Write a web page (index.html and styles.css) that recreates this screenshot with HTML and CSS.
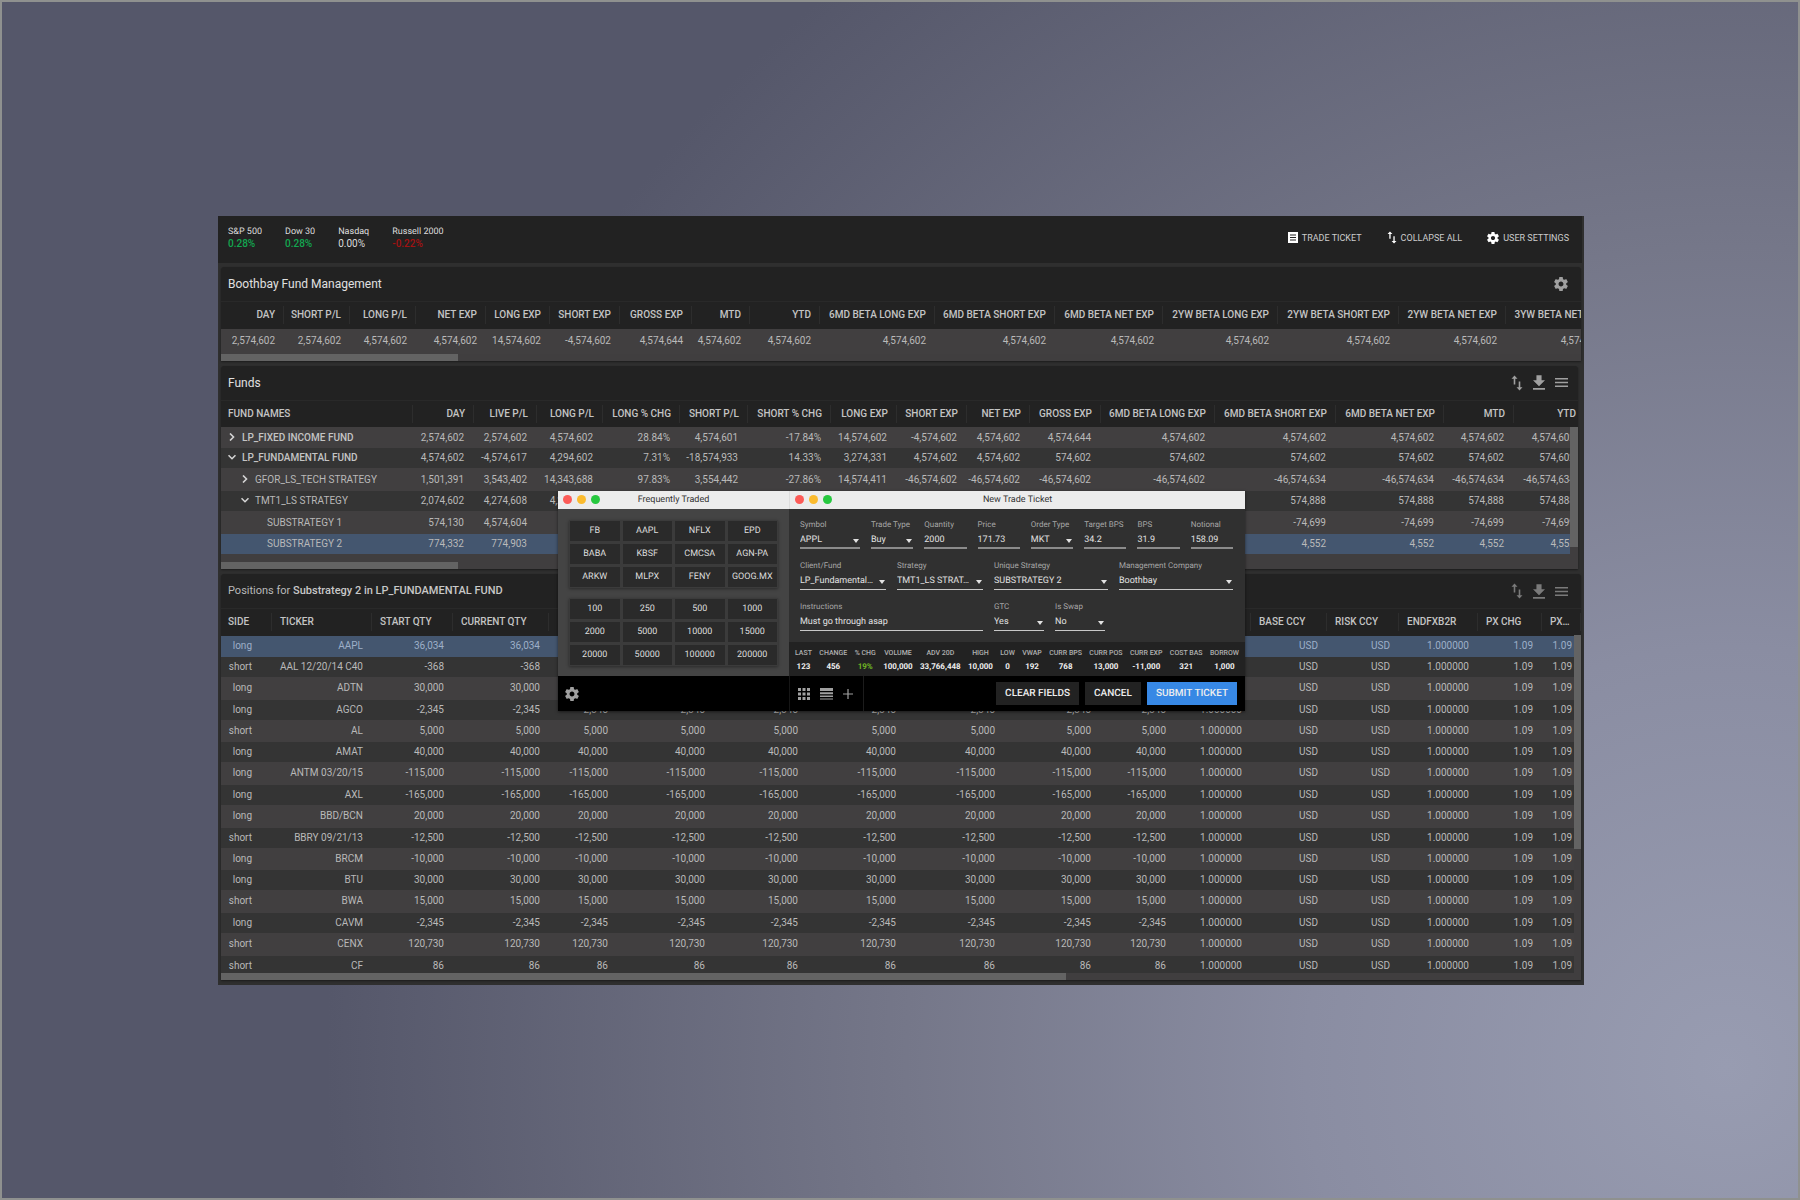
FILE: index.html
```html
<!DOCTYPE html>
<html lang="en">
<head>
<meta charset="utf-8">
<title>Boothbay Fund Management</title>
<link rel="stylesheet" href="styles.css">
</head>
<body>
<svg class="sprite" aria-hidden="true">
  <symbol id="i-gear" viewBox="2 2 20 20"><path d="M19.43 12.98c.04-.32.07-.64.07-.98s-.03-.66-.07-.98l2.11-1.65c.19-.15.24-.42.12-.64l-2-3.46c-.12-.22-.39-.3-.61-.22l-2.49 1c-.52-.4-1.08-.73-1.69-.98l-.38-2.65C14.46 2.18 14.25 2 14 2h-4c-.25 0-.46.18-.49.42l-.38 2.65c-.61.25-1.17.59-1.69.98l-2.49-1c-.23-.09-.49 0-.61.22l-2 3.46c-.13.22-.07.49.12.64l2.11 1.65c-.04.32-.07.65-.07.98s.03.66.07.98l-2.11 1.65c-.19.15-.24.42-.12.64l2 3.46c.12.22.39.3.61.22l2.49-1c.52.4 1.08.73 1.69.98l.38 2.65c.03.24.24.42.49.42h4c.25 0 .46-.18.49-.42l.38-2.65c.61-.25 1.17-.59 1.69-.98l2.49 1c.23.09.49 0 .61-.22l2-3.46c.12-.22.07-.49-.12-.64l-2.11-1.65zM12 15.5c-1.93 0-3.500-1.57-3.500-3.5s1.57-3.500 3.500-3.500 3.500 1.57 3.500 3.500-1.57 3.500-3.500 3.500z"/></symbol>
  <symbol id="i-sort" viewBox="0 0 12 16"><path d="M3.5 0.5L0.5 3.700h2.200v5.800h1.600V3.700h2.200zM8.500 15.500l3-3.200H9.300V6.500H7.700v5.800H5.500z"/></symbol>
  <symbol id="i-ticket" viewBox="0 0 10 11"><path fill-rule="evenodd" d="M0 0h10v11H0zM2 2.500v1h6v-1zM2 5v1h6V5zM2 7.500v1h6v-1z"/></symbol>
  <symbol id="i-download" viewBox="5 3 14 17"><path d="M19 9h-4V3H9v6H5l7 7 7-7zM5 18v2h14v-2H5z"/></symbol>
  <symbol id="i-menu" viewBox="0 0 13 9"><path d="M0 0h13v1.400H0zM0 3.800h13v1.400H0zM0 7.600h13V9H0z"/></symbol>
  <symbol id="i-right" viewBox="0 0 8 8"><path d="M2 0.500L5.500 4L2 7.500" fill="none" stroke="currentColor" stroke-width="1.600"/></symbol>
  <symbol id="i-down" viewBox="0 0 8 8"><path d="M0.500 2.200L4 5.700L7.500 2.200" fill="none" stroke="currentColor" stroke-width="1.600"/></symbol>
  <symbol id="i-grid" viewBox="0 0 12 12"><path d="M0 0h3v3H0zM4.500 0h3v3h-3zM9 0h3v3H9zM0 4.500h3v3H0zM4.500 4.500h3v3h-3zM9 4.500h3v3H9zM0 9h3v3H0zM4.500 9h3v3h-3zM9 9h3v3H9z"/></symbol>
  <symbol id="i-list" viewBox="0 0 13 12"><path d="M0 0h13v3H0zM0 4.200h13v2H0zM0 7.400h13v1.600H0zM0 10.400h13v1H0z"/></symbol>
  <symbol id="i-plus" viewBox="0 0 10 10"><path d="M4.400 0h1.200v4.400H10v1.200H5.600V10H4.400V5.600H0V4.400h4.400z"/></symbol>
</svg>

<div class="stage">
  <div class="app">
    <header class="topbar">
      <dl class="indices">
        <div><dt>S&amp;P 500</dt><dd class="up">0.28%</dd></div>
        <div><dt>Dow 30</dt><dd class="up">0.28%</dd></div>
        <div><dt>Nasdaq</dt><dd>0.00%</dd></div>
        <div><dt>Russell 2000</dt><dd class="down">-0.22%</dd></div>
      </dl>
      <nav class="actions">
        <button type="button"><svg class="icon icon--ticket"><use href="#i-ticket"/></svg>TRADE TICKET</button>
        <button type="button"><svg class="icon icon--collapse"><use href="#i-sort"/></svg>COLLAPSE ALL</button>
        <button type="button"><svg class="icon icon--settings"><use href="#i-gear"/></svg>USER SETTINGS</button>
      </nav>
    </header>

    <main class="panels">
      <section class="panel">
        <div class="panel__head">
          <h2>Boothbay Fund Management</h2>
          <button type="button" class="tool" aria-label="Settings"><svg class="icon icon--gear"><use href="#i-gear"/></svg></button>
        </div>
        <div class="panel__body">
          <table class="grid grid--summary">
            <colgroup><col><col><col><col><col><col><col><col><col><col><col><col><col><col><col><col></colgroup>
            <thead><tr><th>DAY</th><th>SHORT P/L</th><th>LONG P/L</th><th>NET EXP</th><th>LONG EXP</th><th>SHORT EXP</th><th>GROSS EXP</th><th>MTD</th><th>YTD</th><th>6MD BETA LONG EXP</th><th>6MD BETA SHORT EXP</th><th>6MD BETA NET EXP</th><th>2YW BETA LONG EXP</th><th>2YW BETA SHORT EXP</th><th>2YW BETA NET EXP</th><th>3YW BETA NET EXP</th></tr></thead>
            <tbody><tr><td>2,574,602</td><td>2,574,602</td><td>4,574,602</td><td>4,574,602</td><td>14,574,602</td><td>-4,574,602</td><td>4,574,644</td><td>4,574,602</td><td>4,574,602</td><td>4,574,602</td><td>4,574,602</td><td>4,574,602</td><td>4,574,602</td><td>4,574,602</td><td>4,574,602</td><td>4,574,602</td></tr></tbody>
          </table>
        </div>
        <div class="hbar"><span class="hbar__thumb"></span></div>
      </section>

      <section class="panel panel--funds">
        <div class="panel__head">
          <h2>Funds</h2>
          <div class="tools">
            <button type="button" class="tool" aria-label="Sort"><svg class="icon icon--sort"><use href="#i-sort"/></svg></button>
            <button type="button" class="tool" aria-label="Download"><svg class="icon icon--download"><use href="#i-download"/></svg></button>
            <button type="button" class="tool" aria-label="Menu"><svg class="icon icon--menu"><use href="#i-menu"/></svg></button>
          </div>
        </div>
        <div class="panel__body">
          <table class="grid grid--funds">
            <colgroup><col><col><col><col><col><col><col><col><col><col><col><col><col><col><col><col></colgroup>
            <thead><tr><th>FUND NAMES</th><th>DAY</th><th>LIVE P/L</th><th>LONG P/L</th><th>LONG % CHG</th><th>SHORT P/L</th><th>SHORT % CHG</th><th>LONG EXP</th><th>SHORT EXP</th><th>NET EXP</th><th>GROSS EXP</th><th>6MD BETA LONG EXP</th><th>6MD BETA SHORT EXP</th><th>6MD BETA NET EXP</th><th>MTD</th><th>YTD</th></tr></thead>
            <tbody>
              <tr><td class="fund"><svg class="icon icon--chevron"><use href="#i-right"/></svg>LP_FIXED INCOME FUND</td><td>2,574,602</td><td>2,574,602</td><td>4,574,602</td><td>28.84%</td><td>4,574,601</td><td>-17.84%</td><td>14,574,602</td><td>-4,574,602</td><td>4,574,602</td><td>4,574,644</td><td>4,574,602</td><td>4,574,602</td><td>4,574,602</td><td>4,574,602</td><td>4,574,602</td></tr>
              <tr><td class="fund"><svg class="icon icon--chevron"><use href="#i-down"/></svg>LP_FUNDAMENTAL FUND</td><td>4,574,602</td><td>-4,574,617</td><td>4,294,602</td><td>7.31%</td><td>-18,574,933</td><td>14.33%</td><td>3,274,331</td><td>4,574,602</td><td>4,574,602</td><td>574,602</td><td>574,602</td><td>574,602</td><td>574,602</td><td>574,602</td><td>574,602</td></tr>
              <tr><td class="strategy"><svg class="icon icon--chevron"><use href="#i-right"/></svg>GFOR_LS_TECH STRATEGY</td><td>1,501,391</td><td>3,543,402</td><td>14,343,688</td><td>97.83%</td><td>3,554,442</td><td>-27.86%</td><td>14,574,411</td><td>-46,574,602</td><td>-46,574,602</td><td>-46,574,602</td><td>-46,574,602</td><td>-46,574,634</td><td>-46,574,634</td><td>-46,574,634</td><td>-46,574,634</td></tr>
              <tr><td class="strategy"><svg class="icon icon--chevron"><use href="#i-down"/></svg>TMT1_LS STRATEGY</td><td>2,074,602</td><td>4,274,608</td><td>4,274,608</td><td colspan="8"></td><td>574,888</td><td>574,888</td><td>574,888</td><td>574,888</td></tr>
              <tr><td class="substrategy">SUBSTRATEGY 1</td><td>574,130</td><td>4,574,604</td><td colspan="9"></td><td>-74,699</td><td>-74,699</td><td>-74,699</td><td>-74,699</td></tr>
              <tr class="selected"><td class="substrategy">SUBSTRATEGY 2</td><td>774,332</td><td>774,903</td><td colspan="9"></td><td>4,552</td><td>4,552</td><td>4,552</td><td>4,552</td></tr>
            </tbody>
          </table>
          <div class="vbar"><span class="vbar__thumb"></span></div>
        </div>
        <div class="hbar"><span class="hbar__thumb"></span></div>
      </section>

      <section class="panel panel--positions">
        <div class="panel__head">
          <h2>Positions for <strong>Substrategy 2 in LP_FUNDAMENTAL FUND</strong></h2>
          <div class="tools">
            <button type="button" class="tool" aria-label="Sort"><svg class="icon icon--sort"><use href="#i-sort"/></svg></button>
            <button type="button" class="tool" aria-label="Download"><svg class="icon icon--download"><use href="#i-download"/></svg></button>
            <button type="button" class="tool" aria-label="Menu"><svg class="icon icon--menu"><use href="#i-menu"/></svg></button>
          </div>
        </div>
        <div class="panel__body">
          <table class="grid grid--positions">
            <colgroup><col><col><col><col><col><col><col><col><col><col><col><col><col><col><col><col><col></colgroup>
            <thead><tr><th>SIDE</th><th>TICKER</th><th>START QTY</th><th>CURRENT QTY</th><th colspan="8"></th><th>BASE CCY</th><th>RISK CCY</th><th>ENDFXB2R</th><th>PX CHG</th><th>PX…</th></tr></thead>
            <tbody>
              <tr class="selected"><td>long</td><td>AAPL</td><td>36,034</td><td>36,034</td><td colspan="8"></td><td>USD</td><td>USD</td><td>1.000000</td><td>1.09</td><td>1.09</td></tr>
              <tr><td>short</td><td>AAL 12/20/14 C40</td><td>-368</td><td>-368</td><td colspan="8"></td><td>USD</td><td>USD</td><td>1.000000</td><td>1.09</td><td>1.09</td></tr>
              <tr><td>long</td><td>ADTN</td><td>30,000</td><td>30,000</td><td colspan="8"></td><td>USD</td><td>USD</td><td>1.000000</td><td>1.09</td><td>1.09</td></tr>
              <tr><td>long</td><td>AGCO</td><td>-2,345</td><td>-2,345</td><td>-2,345</td><td>-2,345</td><td>-2,345</td><td>-2,345</td><td>-2,345</td><td>-2,345</td><td>-2,345</td><td>1.000000</td><td>USD</td><td>USD</td><td>1.000000</td><td>1.09</td><td>1.09</td></tr>
              <tr><td>short</td><td>AL</td><td>5,000</td><td>5,000</td><td>5,000</td><td>5,000</td><td>5,000</td><td>5,000</td><td>5,000</td><td>5,000</td><td>5,000</td><td>1.000000</td><td>USD</td><td>USD</td><td>1.000000</td><td>1.09</td><td>1.09</td></tr>
              <tr><td>long</td><td>AMAT</td><td>40,000</td><td>40,000</td><td>40,000</td><td>40,000</td><td>40,000</td><td>40,000</td><td>40,000</td><td>40,000</td><td>40,000</td><td>1.000000</td><td>USD</td><td>USD</td><td>1.000000</td><td>1.09</td><td>1.09</td></tr>
              <tr><td>long</td><td>ANTM 03/20/15</td><td>-115,000</td><td>-115,000</td><td>-115,000</td><td>-115,000</td><td>-115,000</td><td>-115,000</td><td>-115,000</td><td>-115,000</td><td>-115,000</td><td>1.000000</td><td>USD</td><td>USD</td><td>1.000000</td><td>1.09</td><td>1.09</td></tr>
              <tr><td>long</td><td>AXL</td><td>-165,000</td><td>-165,000</td><td>-165,000</td><td>-165,000</td><td>-165,000</td><td>-165,000</td><td>-165,000</td><td>-165,000</td><td>-165,000</td><td>1.000000</td><td>USD</td><td>USD</td><td>1.000000</td><td>1.09</td><td>1.09</td></tr>
              <tr><td>long</td><td>BBD/BCN</td><td>20,000</td><td>20,000</td><td>20,000</td><td>20,000</td><td>20,000</td><td>20,000</td><td>20,000</td><td>20,000</td><td>20,000</td><td>1.000000</td><td>USD</td><td>USD</td><td>1.000000</td><td>1.09</td><td>1.09</td></tr>
              <tr><td>short</td><td>BBRY 09/21/13</td><td>-12,500</td><td>-12,500</td><td>-12,500</td><td>-12,500</td><td>-12,500</td><td>-12,500</td><td>-12,500</td><td>-12,500</td><td>-12,500</td><td>1.000000</td><td>USD</td><td>USD</td><td>1.000000</td><td>1.09</td><td>1.09</td></tr>
              <tr><td>long</td><td>BRCM</td><td>-10,000</td><td>-10,000</td><td>-10,000</td><td>-10,000</td><td>-10,000</td><td>-10,000</td><td>-10,000</td><td>-10,000</td><td>-10,000</td><td>1.000000</td><td>USD</td><td>USD</td><td>1.000000</td><td>1.09</td><td>1.09</td></tr>
              <tr><td>long</td><td>BTU</td><td>30,000</td><td>30,000</td><td>30,000</td><td>30,000</td><td>30,000</td><td>30,000</td><td>30,000</td><td>30,000</td><td>30,000</td><td>1.000000</td><td>USD</td><td>USD</td><td>1.000000</td><td>1.09</td><td>1.09</td></tr>
              <tr><td>short</td><td>BWA</td><td>15,000</td><td>15,000</td><td>15,000</td><td>15,000</td><td>15,000</td><td>15,000</td><td>15,000</td><td>15,000</td><td>15,000</td><td>1.000000</td><td>USD</td><td>USD</td><td>1.000000</td><td>1.09</td><td>1.09</td></tr>
              <tr><td>long</td><td>CAVM</td><td>-2,345</td><td>-2,345</td><td>-2,345</td><td>-2,345</td><td>-2,345</td><td>-2,345</td><td>-2,345</td><td>-2,345</td><td>-2,345</td><td>1.000000</td><td>USD</td><td>USD</td><td>1.000000</td><td>1.09</td><td>1.09</td></tr>
              <tr><td>short</td><td>CENX</td><td>120,730</td><td>120,730</td><td>120,730</td><td>120,730</td><td>120,730</td><td>120,730</td><td>120,730</td><td>120,730</td><td>120,730</td><td>1.000000</td><td>USD</td><td>USD</td><td>1.000000</td><td>1.09</td><td>1.09</td></tr>
              <tr><td>short</td><td>CF</td><td>86</td><td>86</td><td>86</td><td>86</td><td>86</td><td>86</td><td>86</td><td>86</td><td>86</td><td>1.000000</td><td>USD</td><td>USD</td><td>1.000000</td><td>1.09</td><td>1.09</td></tr>
            </tbody>
          </table>
          <div class="vbar"><span class="vbar__thumb"></span></div>
        </div>
        <div class="hbar"><span class="hbar__thumb"></span></div>
      </section>
    </main>

    <div class="windows">
      <section class="window window--quick">
        <header class="titlebar">
          <span class="lights"><i></i><i></i><i></i></span>
          <h3>Frequently Traded</h3>
        </header>
        <div class="quick">
          <div class="keys">
            <button type="button">FB</button><button type="button">AAPL</button><button type="button">NFLX</button><button type="button">EPD</button>
            <button type="button">BABA</button><button type="button">KBSF</button><button type="button">CMCSA</button><button type="button">AGN-PA</button>
            <button type="button">ARKW</button><button type="button">MLPX</button><button type="button">FENY</button><button type="button">GOOG.MX</button>
          </div>
          <div class="keys">
            <button type="button">100</button><button type="button">250</button><button type="button">500</button><button type="button">1000</button>
            <button type="button">2000</button><button type="button">5000</button><button type="button">10000</button><button type="button">15000</button>
            <button type="button">20000</button><button type="button">50000</button><button type="button">100000</button><button type="button">200000</button>
          </div>
        </div>
        <footer class="footer">
          <button type="button" class="tool" aria-label="Settings"><svg class="icon icon--gear"><use href="#i-gear"/></svg></button>
        </footer>
      </section>

      <form class="window window--ticket">
        <header class="titlebar">
          <span class="lights"><i></i><i></i><i></i></span>
          <h3>New Trade Ticket</h3>
        </header>
        <div class="fields">
          <div class="fields__row fields__row--order">
            <div class="field field--select"><label for="symbol">Symbol</label><select id="symbol"><option>APPL</option></select></div>
            <div class="field field--select"><label for="type">Trade Type</label><select id="type"><option>Buy</option></select></div>
            <div class="field"><label for="qty">Quantity</label><input id="qty" value="2000"></div>
            <div class="field"><label for="price">Price</label><input id="price" value="171.73"></div>
            <div class="field field--select"><label for="order">Order Type</label><select id="order"><option>MKT</option></select></div>
            <div class="field"><label for="target">Target BPS</label><input id="target" value="34.2"></div>
            <div class="field"><label for="bps">BPS</label><input id="bps" value="31.9"></div>
            <div class="field"><label for="notional">Notional</label><input id="notional" value="158.09"></div>
          </div>
          <div class="fields__row fields__row--account">
            <div class="field field--select"><label for="client">Client/Fund</label><select id="client"><option>LP_Fundamental…</option></select></div>
            <div class="field field--select"><label for="strategy">Strategy</label><select id="strategy"><option>TMT1_LS STRAT…</option></select></div>
            <div class="field field--select"><label for="unique">Unique Strategy</label><select id="unique"><option>SUBSTRATEGY 2</option></select></div>
            <div class="field field--select"><label for="company">Management Company</label><select id="company"><option>Boothbay</option></select></div>
          </div>
          <div class="fields__row fields__row--notes">
            <div class="field"><label for="notes">Instructions</label><input id="notes" value="Must go through asap"></div>
            <div class="field field--select"><label for="gtc">GTC</label><select id="gtc"><option>Yes</option></select></div>
            <div class="field field--select"><label for="swap">Is Swap</label><select id="swap"><option>No</option></select></div>
          </div>
        </div>
        <dl class="stats">
          <div><dt>LAST</dt><dd>123</dd></div>
          <div><dt>CHANGE</dt><dd>456</dd></div>
          <div><dt>% CHG</dt><dd class="gain">19%</dd></div>
          <div><dt>VOLUME</dt><dd>100,000</dd></div>
          <div><dt>ADV 20D</dt><dd>33,766,448</dd></div>
          <div><dt>HIGH</dt><dd>10,000</dd></div>
          <div><dt>LOW</dt><dd>0</dd></div>
          <div><dt>VWAP</dt><dd>192</dd></div>
          <div><dt>CURR BPS</dt><dd>768</dd></div>
          <div><dt>CURR POS</dt><dd>13,000</dd></div>
          <div><dt>CURR EXP</dt><dd>-11,000</dd></div>
          <div><dt>COST BAS</dt><dd>321</dd></div>
          <div><dt>BORROW</dt><dd>1,000</dd></div>
        </dl>
        <footer class="footer footer--ticket">
          <div class="views">
            <button type="button" class="tool" aria-label="Grid view"><svg class="icon icon--grid"><use href="#i-grid"/></svg></button>
            <button type="button" class="tool" aria-label="List view"><svg class="icon icon--list"><use href="#i-list"/></svg></button>
            <button type="button" class="tool" aria-label="Add"><svg class="icon icon--plus"><use href="#i-plus"/></svg></button>
          </div>
          <div class="commands">
            <button type="reset" class="btn">CLEAR FIELDS</button>
            <button type="button" class="btn">CANCEL</button>
            <button type="submit" class="btn btn--primary">SUBMIT TICKET</button>
          </div>
        </footer>
      </form>
    </div>
  </div>
</div>
</body>
</html>
```
FILE: styles.css
```css
* { box-sizing: border-box; }

body {
  margin: 0;
  font-family: Roboto, "Liberation Sans", sans-serif;
  font-size: 10px;
  color: #b9b9b9;
}

h2, h3, dl, dd { margin: 0; font-weight: 400; }

button, input, select {
  font: inherit;
  color: inherit;
  background: none;
  border: 0;
  border-radius: 0;
  padding: 0;
  margin: 0;
  text-rendering: inherit;
}

.sprite { display: none; }
.icon { display: block; fill: currentColor; flex: none; }
.icon--ticket { width: 10px; height: 11px; }
.icon--collapse { width: 10px; height: 13px; }
.icon--settings { width: 12px; height: 12px; }
.icon--gear { width: 14px; height: 14px; }
.icon--sort { width: 12px; height: 16px; }
.icon--download { width: 12px; height: 15px; }
.icon--menu { width: 13px; height: 9px; }
.icon--grid { width: 12px; height: 12px; }
.icon--list { width: 13px; height: 12px; }
.icon--plus { width: 10px; height: 10px; }

/* Desktop backdrop */
.stage {
  display: flex;
  height: 100vh;
  padding: 214px 214px 213px 216px;
  border: 2px solid #8f918f;
  background: radial-gradient(circle at 96% 89%, #989cb1 0, #8a8da2 420px, #757789 820px, #55576a 1400px);
}

.app {
  position: relative;
  flex: 1;
  display: flex;
  flex-direction: column;
  min-width: 0;
  min-height: 0;
  background: #2f2f2f;
}

/* Top bar */
.topbar {
  display: flex;
  justify-content: space-between;
  align-items: center;
  height: 47px;
  flex: none;
  margin-right: 2px;
  padding: 0 13px 4px 10px;
  background: #222;
}
.indices { display: flex; gap: 23px; color: #ddd; }
.indices dt { font-size: 9px; line-height: 12px; text-rendering: geometricPrecision; }
.indices dd { line-height: 12px; }
.indices .up { color: #12a750; font-weight: 500; }
.indices .down { color: #a31111; font-weight: 500; }
.actions { display: flex; gap: 25px; color: #ccc; }
.actions button { display: flex; align-items: center; gap: 4px; font-size: 9px; line-height: 12px; }
.actions .icon { color: #fff; }

/* Panels */
.panels {
  flex: 1;
  min-height: 0;
  display: flex;
  flex-direction: column;
  gap: 5px;
  padding: 4px 3px 5px;
}
.panel {
  display: flex;
  flex-direction: column;
  flex: none;
  border-radius: 2px 2px 0 0;
  background: #403e3f;
  box-shadow: 0 1px 2px #1c1c1c;
  overflow: hidden;
}
.panel--funds { margin-right: 3px; }
.panel--positions { flex: 1; min-height: 0; }
.panel__head {
  display: flex;
  align-items: center;
  justify-content: space-between;
  flex: none;
  height: 34px;
  padding: 0 13px 0 7px;
  background: #222;
}
.panel--funds .panel__head { padding-right: 10px; }
.panel h2 { font-size: 12px; line-height: 16px; color: #e0e0e0; }
.panel--positions h2 { font-size: 11px; color: #b9b9b9; }
.panel h2 strong { font-weight: 500; color: #c8c8c8; }
.panel__body { position: relative; overflow: hidden; }
.panel--funds .panel__body { padding-bottom: 8px; }
.panel--positions .panel__body { flex: 1; min-height: 0; }
.tools { display: flex; align-items: center; gap: 10px; }
.tool { color: #a0a0a0; }
.panel--positions .tool { color: #7a7a7a; }

/* Data grids */
.grid { table-layout: fixed; width: 100%; border-collapse: collapse; }
.grid th, .grid td {
  padding: 0 9px 0 0;
  line-height: 16px;
  text-align: right;
  white-space: nowrap;
  overflow: hidden;
}
.grid th {
  height: 27px;
  font-weight: 500;
  color: #c4c4c4;
  background: #222 linear-gradient(#2d2d2d, #2d2d2d) no-repeat right center / 1px 18px;
}
.grid thead { border-top: 1px solid #292929; }
.grid tbody td { height: 20px; background: #343434; }
.grid tbody tr:nth-child(odd) td { height: 23px; background: #413f40; }
.grid tbody tr:first-child td { height: 21px; }
.grid tbody tr.selected td { background: #44566f; }

.grid--summary tbody tr:first-child td { height: 25px; }
.grid--summary col:nth-child(1) { width: 63px; }
.grid--summary col:nth-child(2), .grid--summary col:nth-child(3) { width: 66px; }
.grid--summary col:nth-child(4), .grid--summary col:nth-child(6), .grid--summary col:nth-child(9) { width: 70px; }
.grid--summary col:nth-child(5) { width: 64px; }
.grid--summary col:nth-child(7) { width: 72px; }
.grid--summary col:nth-child(8) { width: 58px; }
.grid--summary col:nth-child(10), .grid--summary col:nth-child(13) { width: 115px; }
.grid--summary col:nth-child(11) { width: 120px; }
.grid--summary col:nth-child(12) { width: 108px; }
.grid--summary col:nth-child(14) { width: 121px; }
.grid--summary col:nth-child(15), .grid--summary col:nth-child(16) { width: 107px; }

.grid--funds td { padding-right: 10px; }
.grid--funds th:first-child { padding-left: 7px; text-align: left; }
.grid--funds col:nth-child(1) { width: 192px; }
.grid--funds col:nth-child(2) { width: 61px; }
.grid--funds col:nth-child(3), .grid--funds col:nth-child(10) { width: 63px; }
.grid--funds col:nth-child(4), .grid--funds col:nth-child(8) { width: 66px; }
.grid--funds col:nth-child(5) { width: 77px; }
.grid--funds col:nth-child(6) { width: 68px; }
.grid--funds col:nth-child(7) { width: 83px; }
.grid--funds col:nth-child(9), .grid--funds col:nth-child(15) { width: 70px; }
.grid--funds col:nth-child(11), .grid--funds col:nth-child(16) { width: 71px; }
.grid--funds col:nth-child(12) { width: 114px; }
.grid--funds col:nth-child(13) { width: 121px; }
.grid--funds col:nth-child(14) { width: 108px; }
.grid .fund, .grid .strategy, .grid .substrategy { text-align: left; }
.grid .fund { padding-left: 7px; font-weight: 500; color: #c4c4c4; }
.grid .strategy { padding-left: 20px; }
.grid .substrategy { padding-left: 46px; }
.icon--chevron {
  display: inline-block;
  width: 8px;
  height: 8px;
  margin-right: 6px;
  color: #d4d4d4;
}

.grid--positions th { padding: 0 0 0 8px; text-align: left; }
.grid--positions th:first-child { padding-left: 7px; }
.grid--positions td:first-child { padding-right: 20px; }
.grid--positions .selected td { color: #9dafc8; }
.grid--positions tbody tr:nth-child(6n + 5) td { height: 22px; }
.grid--positions col:nth-child(1) { width: 51px; }
.grid--positions col:nth-child(2) { width: 100px; }
.grid--positions col:nth-child(3) { width: 81px; }
.grid--positions col:nth-child(4), .grid--positions col:nth-child(10) { width: 96px; }
.grid--positions col:nth-child(5) { width: 68px; }
.grid--positions col:nth-child(6) { width: 97px; }
.grid--positions col:nth-child(7) { width: 93px; }
.grid--positions col:nth-child(8) { width: 98px; }
.grid--positions col:nth-child(9) { width: 99px; }
.grid--positions col:nth-child(11) { width: 75px; }
.grid--positions col:nth-child(12), .grid--positions col:nth-child(13) { width: 76px; }
.grid--positions col:nth-child(14) { width: 72px; }
.grid--positions col:nth-child(15) { width: 79px; }
.grid--positions col:nth-child(16) { width: 64px; }

/* Scroll bars */
.hbar { flex: none; height: 7px; background: #403e3f; }
.hbar__thumb { display: block; width: 237px; height: 7px; background: #636363; }
.panel--positions .hbar__thumb { width: 845px; }
.vbar {
  position: absolute;
  top: 27px;
  right: 0;
  bottom: 0;
  width: 7px;
  background: #403e3f;
}
.vbar__thumb { display: block; height: 120px; background: #636363; }
.panel--funds .vbar { width: 8px; }
.panel--positions .vbar__thumb { height: 214px; }

/* Floating windows */
.windows {
  position: absolute;
  top: 275px;
  left: 340px;
  display: flex;
  width: 687px;
  box-shadow: 0 1px 3px #0008;
  text-rendering: geometricPrecision;
}
.window { display: flex; flex-direction: column; }
.window--quick { width: 231px; background: #444; }
.window--ticket { flex: 1; background: #303030; }
.titlebar {
  display: grid;
  grid-template-columns: 1fr auto 1fr;
  align-items: center;
  height: 18px;
  padding: 0 5px 1px;
  background: #ececec;
  color: #333;
}
.window--ticket .titlebar { border-left: 1px solid #ddd; }
.titlebar h3 { font-size: 9px; line-height: 16px; }
.lights { display: flex; gap: 5px; }
.lights i { width: 9px; height: 9px; border-radius: 50%; background: #fc5b57; }
.lights i:nth-child(2) { background: #fbbb2e; }
.lights i:nth-child(3) { background: #27c83f; }

.quick {
  flex: 1;
  display: flex;
  flex-direction: column;
  gap: 10px;
  padding: 11px 11px 10px;
}
.keys {
  display: grid;
  grid-template-columns: repeat(4, 1fr);
  gap: 3px;
  padding: 1px;
  background: #3b3b3b;
  box-shadow: 0 1px 3px #0006;
}
.keys button {
  height: 20px;
  font-size: 9px;
  color: #ddd;
  background: #2a2a2a;
}

.fields {
  flex: 1;
  display: flex;
  flex-direction: column;
  gap: 12px;
  padding: 11px 12px 11px 11px;
}
.fields__row { display: grid; gap: 11px; }
.fields__row--order { grid-template-columns: 60px repeat(7, minmax(0, 1fr)); }
.fields__row--account { grid-template-columns: 86px 86px 1fr 1fr; }
.fields__row--notes { grid-template-columns: 183px 50px 50px; }
.field { position: relative; display: flex; flex-direction: column; gap: 2px; min-width: 0; }
.field label { font-size: 8px; line-height: 10px; color: #a6a6a6; white-space: nowrap; }
.field input, .field select {
  width: 100%;
  height: 17px;
  padding-bottom: 1px;
  font-size: 9px;
  color: #e2e2e2;
  border-bottom: 1px solid #c8c8c8;
  appearance: none;
  outline: 0;
}
.fields__row--order input, .fields__row--order select { border-bottom: 2px solid #8b8b8b; padding-bottom: 0; }
.field--select::after {
  content: "";
  position: absolute;
  right: 1px;
  bottom: 6px;
  border: 3px solid transparent;
  border-top: 4px solid #e2e2e2;
  border-bottom: 0;
}

.stats {
  display: flex;
  justify-content: space-between;
  height: 34px;
  padding: 6px 6px 0;
  background: #222;
  text-align: center;
}
.stats dt { font-size: 7px; font-weight: 500; line-height: 10px; color: #b0b0b0; white-space: nowrap; }
.stats dd { margin-top: 3px; font-size: 8px; font-weight: 700; line-height: 12px; color: #eee; }
.stats .gain { color: #6fb523; }

.footer { display: flex; align-items: center; height: 35px; padding: 0 7px; background: #000; }
.footer--ticket { padding: 0 8px 0 0; border-left: 1px solid #161616; }
.views {
  display: flex;
  align-items: center;
  align-self: stretch;
  gap: 10px;
  padding: 0 10px 0 8px;
  border-right: 1px solid #1c1c1c;
}
.commands { display: flex; gap: 6px; margin-left: auto; }
.btn { height: 23px; padding: 0 9px; font-weight: 500; color: #eee; background: #222; }
.btn--primary { background: #3788e5; }
```
